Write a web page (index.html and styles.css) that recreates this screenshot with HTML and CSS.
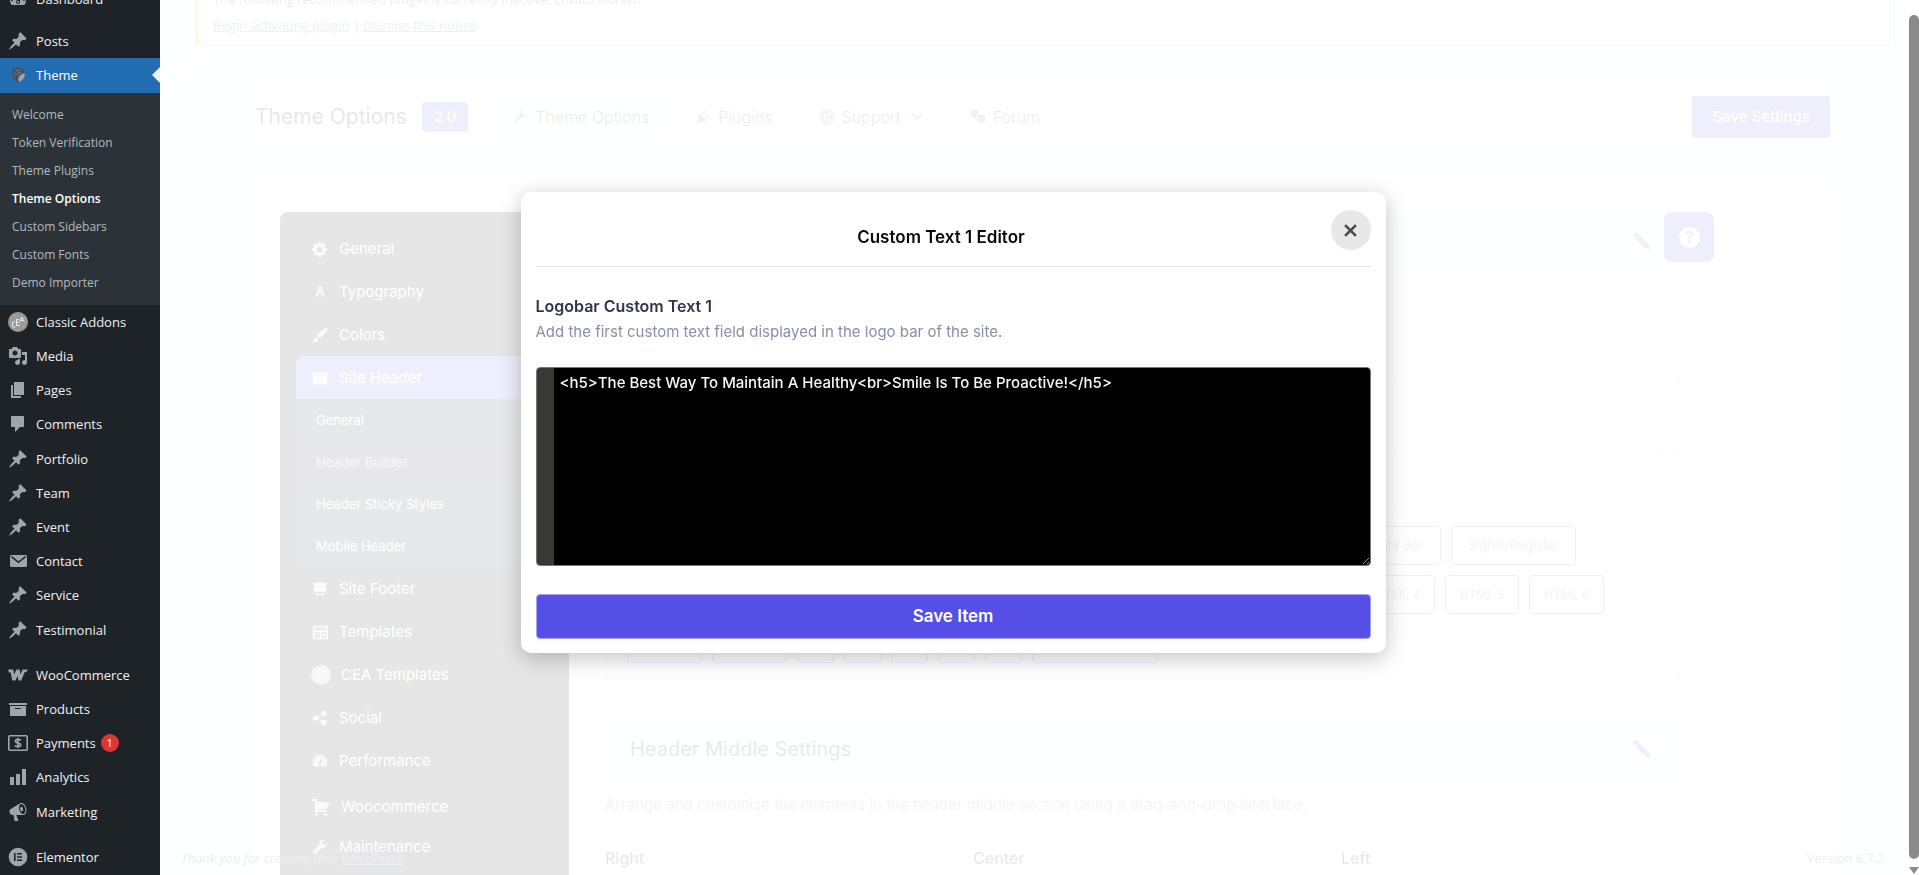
FILE: index.html
```
<!DOCTYPE html>
<html lang="en">
<head>
<meta charset="utf-8">
<title>Theme Options</title>
<link rel="stylesheet" href="styles.css">
</head>
<body>
<svg class="sprite" aria-hidden="true">
  <symbol id="pin" viewBox="0 0 20 20"><path d="M10.44 3.02l1.82-1.82 6.36 6.35-1.83 1.82c-1.05-.68-2.48-.57-3.41.36l-.75.75c-.92.93-1.04 2.35-.35 3.41l-1.83 1.82-2.41-2.41-2.8 2.79c-.42.42-3.38 2.71-3.8 2.29s1.86-3.39 2.28-3.81l2.79-2.79L4.1 9.36l1.83-1.82c1.05.69 2.48.57 3.4-.36l.75-.75c.93-.92 1.05-2.35.36-3.41z"/></symbol>
  <symbol id="media" viewBox="0 0 20 20"><path d="M13 11V4c0-.55-.45-1-1-1h-1.67L9 1H5L3.67 3H2c-.55 0-1 .45-1 1v7c0 .55.45 1 1 1h10c.55 0 1-.45 1-1zM7 4.5c1.38 0 2.5 1.12 2.5 2.5S8.38 9.5 7 9.5 4.5 8.38 4.5 7 5.62 4.5 7 4.5zM14 6h5v10.5c0 1.38-1.12 2.5-2.5 2.5S14 17.88 14 16.5s1.12-2.5 2.5-2.5c.17 0 .34.02.5.05V9h-3V6zm-4 8.05V13h2v3.5c0 1.38-1.12 2.5-2.5 2.5S7 17.88 7 16.5 8.12 14 9.5 14c.17 0 .34.02.5.05z"/></symbol>
  <symbol id="pages" viewBox="0 0 20 20"><path d="M6 15V2h10v13H6zm-1 1h8v2H3V5h2v11z"/></symbol>
  <symbol id="comments" viewBox="0 0 20 20"><path d="M4 2h11c.6 0 1 .4 1 1v9c0 .6-.4 1-1 1h-3l-5 5v-5H4c-.6 0-1-.4-1-1V3c0-.6.4-1 1-1z"/></symbol>
  <symbol id="mail" viewBox="0 0 20 20"><path d="M3.500 4h14c.8 0 1.500.7 1.500 1.500v9c0 .8-.7 1.500-1.500 1.500h-14C2.700 16 2 15.300 2 14.500v-9C2 4.700 2.700 4 3.500 4z"/><path d="M3.500 5.700l7 5.600 7-5.600" fill="none" stroke="#1d2327" stroke-width="1.600"/></symbol>
  <symbol id="archive" viewBox="0 0 20 20"><path d="M19 4v2H1V4h18zM2 7h16v10H2V7zm11 3V9H7v1h6z"/></symbol>
  <symbol id="chart" viewBox="0 0 20 20"><path d="M18 18V2h-4v16h4zm-6 0V7H8v11h4zm-6 0v-8H2v8h4z"/></symbol>
  <symbol id="megaphone" viewBox="0 0 20 20"><path d="M18.150 5.940c.46 1.620.38 3.220-.02 4.480-.42 1.280-1.260 2.180-2.300 2.480-.16.06-.26.06-.4.06-.06.02-.12.02-.18.02-.06.02-.14.02-.22.02h-6.800l2.220 5.500c.02.14-.06.26-.14.34-.08.1-.24.16-.34.16H6.950c-.1 0-.26-.06-.34-.16-.08-.08-.16-.2-.14-.34l-1-5.500H4.250l-.02-.02c-.5.06-1.080-.18-1.540-.62s-.88-1.080-1.060-1.880c-.24-.8-.2-1.560-.02-2.200.18-.62.58-1.080 1.060-1.300l.02-.02 9-5.400c.1-.06.18-.1.24-.16.06-.04.14-.08.24-.12.16-.08.28-.12.5-.18 1.040-.3 2.240.1 3.220.98s1.840 2.240 2.260 3.860zm-2.580 5.980h-.02c.4-.1.74-.34 1.040-.7.58-.7.86-1.760.86-3.040 0-.64-.1-1.300-.28-1.980-.34-1.360-1.020-2.500-1.780-3.240s-1.680-1.100-2.460-.88c-.82.22-1.400.96-1.700 2-.32 1.040-.28 2.360.06 3.720.38 1.360 1 2.500 1.800 3.240.78.74 1.620 1.100 2.480.88zm-2.540-7.080c.22-.04.42-.02.62.04.38.16.76.48 1.020 1s.42 1.200.42 1.780c0 .3-.04.56-.12.8-.18.48-.44.84-.86.94-.34.1-.8-.06-1.140-.4s-.64-.86-.78-1.500c-.18-.62-.12-1.240.02-1.720s.48-.84.82-.94z"/></symbol>
  <symbol id="gear" viewBox="0 0 20 20"><path d="M18 12h-2.180c-.17.7-.44 1.350-.81 1.930l1.540 1.540-2.100 2.100-1.540-1.540c-.58.36-1.230.63-1.910.79V19H8v-2.180c-.68-.16-1.330-.43-1.910-.79l-1.540 1.540-2.120-2.120 1.540-1.540c-.36-.58-.63-1.230-.79-1.910H1V9.030h2.170c.16-.7.44-1.350.8-1.940L2.430 5.550l2.100-2.100 1.540 1.540c.58-.37 1.240-.64 1.930-.81V2h3v2.180c.68.16 1.330.43 1.910.79l1.540-1.540 2.120 2.120-1.540 1.540c.36.59.64 1.240.8 1.940H18V12zm-8.500 1.500c1.660 0 3-1.340 3-3s-1.340-3-3-3-3 1.340-3 3 1.340 3 3 3z"/></symbol>
  <symbol id="brush" viewBox="0 0 20 20"><path d="M18.330 3.570s.27-.8-.31-1.360c-.53-.52-1.220-.24-1.220-.24-.61.3-5.760 3.470-7.670 5.570-.86.96-2.060 3.790-1.090 4.820.92.98 3.960-.17 4.790-1 2.060-2.060 5.210-7.170 5.500-7.790zM1.400 17.650c2.370-1.560 1.460-3.410 3.230-4.640.93-.65 2.220-.62 3.080.29.63.67.8 2.570-.16 3.460-1.570 1.450-4 1.550-6.150.89z"/></symbol>
  <symbol id="screen" viewBox="0 0 20 20"><path d="M3 3h14v10H3zM5 15h10v2H5z"/></symbol>
  <symbol id="template" viewBox="0 0 20 20"><path fill-rule="evenodd" d="M2 3h17v15H2zM4 5v3h13V5zM4 10v1.300h6V10zM4 12.500v1.300h6v-1.300zM4 15v1.300h6V15zM12 10v6h5v-6z"/><path d="M5 6h3v1H5zM9 6h3v1H9zM13 6h3v1h-3zM13 11h3v4h-3z"/></symbol>
  <symbol id="share" viewBox="0 0 20 20"><path d="M14.500 12c1.660 0 3 1.340 3 3s-1.340 3-3 3-3-1.340-3-3c0-.24.03-.46.09-.69l-4.380-2.300c-.55.61-1.330.99-2.210.99-1.660 0-3-1.340-3-3s1.340-3 3-3c.88 0 1.660.39 2.210.99l4.380-2.300c-.06-.23-.09-.45-.09-.69 0-1.660 1.340-3 3-3s3 1.340 3 3-1.340 3-3 3c-.88 0-1.660-.39-2.210-.99l-4.380 2.300c.06.23.09.45.09.69s-.03.46-.09.69l4.380 2.300c.55-.61 1.330-.99 2.210-.99z"/></symbol>
  <symbol id="gauge" viewBox="0 0 20 20"><path d="M3.760 16h12.480c1.100-1.370 1.760-3.110 1.760-5 0-4.420-3.580-8-8-8s-8 3.580-8 8c0 1.890.66 3.630 1.760 5zM10 4c.55 0 1 .45 1 1s-.45 1-1 1-1-.45-1-1 .45-1 1-1zM6 6c.55 0 1 .45 1 1s-.45 1-1 1-1-.45-1-1 .45-1 1-1zm8 0c.55 0 1 .45 1 1s-.45 1-1 1-1-.45-1-1 .45-1 1-1zm-5.370 5.550L12 7v6c0 1.100-.9 2-2 2s-2-.9-2-2c0-.57.24-1.080.63-1.450zM4 10c.55 0 1 .45 1 1s-.45 1-1 1-1-.45-1-1 .45-1 1-1zm12 0c.55 0 1 .45 1 1s-.45 1-1 1-1-.45-1-1 .45-1 1-1zm-5 3c0-.55-.45-1-1-1s-1 .45-1 1 .45 1 1 1 1-.45 1-1z"/></symbol>
  <symbol id="cart" viewBox="0 0 20 20"><path d="M6 13h9c.55 0 1 .45 1 1s-.45 1-1 1H5c-.55 0-1-.45-1-1V4H2c-.55 0-1-.45-1-1s.45-1 1-1h3c.55 0 1 .45 1 1v2h13l-4 7H6v1zm-.5 3c.83 0 1.500.67 1.500 1.500S6.330 19 5.500 19 4 18.330 4 17.500 4.670 16 5.500 16zm9 0c.83 0 1.500.67 1.500 1.500s-.67 1.500-1.500 1.500-1.500-.67-1.500-1.500.67-1.500 1.500-1.500z"/></symbol>
  <symbol id="wrench" viewBox="0 0 20 20"><path d="M16.680 9.770c-1.340 1.340-3.300 1.670-4.950.99l-5.410 6.520c-.99.99-2.590.99-3.580 0s-.99-2.590 0-3.570l6.520-5.420c-.68-1.650-.35-3.610.99-4.950 1.280-1.280 3.120-1.620 4.720-1.060l-2.890 2.890 2.820 2.820 2.860-2.870c.53 1.580.18 3.390-1.080 4.650zM3.810 16.210c.4.39 1.040.39 1.430 0 .4-.4.4-1.040 0-1.430-.39-.4-1.030-.4-1.430 0-.39.39-.39 1.030 0 1.430z"/></symbol>
  <symbol id="plug" viewBox="0 0 20 20"><path d="M13.110 4.360L9.870 7.600 8 5.730l3.240-3.240c.35-.34 1.050-.2 1.560.32.52.51.66 1.210.31 1.550zm-8 1.770l.91-1.120 9.010 9.010-1.190.84c-.71.71-2.630 1.160-3.820 1.160H6.140L4.900 17.260c-.59.59-1.540.59-2.120 0-.59-.58-.59-1.530 0-2.120l1.240-1.240v-3.880c0-1.130.4-3.190 1.090-3.890zm7.260 3.970l3.240-3.240c.34-.35 1.040-.21 1.550.31.52.51.66 1.210.31 1.550l-3.240 3.250z"/></symbol>
  <symbol id="people" viewBox="0 0 20 20"><path fill-rule="evenodd" d="M10 0a10 10 0 1 0 0 20 10 10 0 0 0 0-20zm0 1.500a8.500 8.500 0 1 1 0 17 8.500 8.500 0 0 1 0-17z"/><path fill-rule="evenodd" d="M10 2.500a7.500 7.500 0 1 0 0 15 7.500 7.500 0 0 0 0-15zM12 4.500a2.500 2.500 0 0 1 1 4.800l-1.500-.3a3 3 0 0 0-1-3A2.500 2.500 0 0 1 12 4.500zM8 6.500a2.200 2.200 0 1 1 0 4.400 2.200 2.200 0 0 1 0-4.400zM4.500 14c.2-1.800 1.500-2.500 3.500-2.500l2 1.500 2-1.500c2 0 3.300.7 3.500 2.500-2 1-9 1-11 0z"/></symbol>
  <symbol id="chat" viewBox="0 0 20 20"><path d="M11 6h-.82C9.070 6 8 7.200 8 8.160V10l-3 3v-3H3c-1.100 0-2-.9-2-2V3c0-1.100.9-2 2-2h6c1.100 0 2 .9 2 2v3zm0 1h6c1.100 0 2 .9 2 2v5c0 1.100-.9 2-2 2h-2v3l-3-3h-1c-1.100 0-2-.9-2-2V9c0-1.100.9-2 2-2z"/></symbol>
  <symbol id="pencil" viewBox="0 0 20 20"><path d="M1.400 5.700C0 4 .4 2.200 1.600 1.200s3-.9 4.200.6L6.600 2.800 2.300 6.700zM7.300 3.500L17.800 14l-.2 2.600-2 1.400-2.600-.3L3 7.400zM18.400 15l1.100 4.400-4.300-.8z"/></symbol>
  <symbol id="cea" viewBox="0 0 20 20"><circle cx="10" cy="10" r="10" fill="#9a9a9a"/><path d="M7 10H5.500Q4.500 10 4.500 11v3q0 1 1 1H7.500M11 7.500H8.500v6H12M8.500 10.500H11M11.500 10l2.300-5 2.400 4.500M12.500 8.300h3" fill="none" stroke="#fff" stroke-width=".8"/></symbol>
  <symbol id="cea-light" viewBox="0 0 20 20"><circle cx="10" cy="10" r="10" fill="#aaa"/><path d="M7 10H5.500Q4.500 10 4.500 11v3q0 1 1 1H7.500M11 7.500H8.500v6H12M8.500 10.500H11M11.500 10l2.300-5 2.400 4.500M12.500 8.300h3" fill="none" stroke="#fff" stroke-width=".8"/></symbol>
  <symbol id="leaf" viewBox="0 0 20 20"><path d="M4.500 7C5 3 9 1 13 3c3 1 4 3 3.500 5L11 9l-1 5 2 3C7 17 4 13 4.500 7z" fill="#4a4f57"/><path d="M16.500 8c1 3-1 7-5.500 9l-1-3c1-3 3-5 6.500-6z" fill="#a3a3a8"/><path d="M6 9c1-3 4-4 7-4M7 12c1-3 3-4 6-5" fill="none" stroke="#8b8f96" stroke-width=".7"/></symbol>
  <symbol id="woo" viewBox="0 0 20 20"><path d="M0 4.500h5.300l.7 5 2.500-5h3.200l.6 5 2.200-5H20L18.300 7h-1.500l-3.600 8.400h-2.700L9.600 11l-2.200 4.400H4.300L2.700 7.500H1z"/></symbol>
  <symbol id="money" viewBox="0 0 20 20"><rect x=".8" y="2.800" width="18.400" height="14.400" rx="1" fill="none" stroke="currentColor" stroke-width="1.600"/><path d="M12.800 7.600q-.5-1.200-2.800-1.200t-2.600 1.600q0 1.500 2.600 2t2.700 2q0 1.600-2.700 1.600t-2.800-1.200M10 5v10" fill="none" stroke="currentColor" stroke-width="1.700"/></symbol>
  <symbol id="elementor" viewBox="0 0 20 20"><path fill-rule="evenodd" d="M10 .7a9.300 9.300 0 1 0 0 18.600A9.300 9.300 0 0 0 10 .7zM6 6h1.600v8H6zM9 6h5v1.500H9zM9 9.200h5v1.500H9zM9 12.500h5V14H9z"/></symbol>
</svg>

<nav class="admin-menu" aria-label="Main menu">
  <ul class="menu-list">
    <li><a class="menu-link" href="#"><svg class="menu-icon"><use href="#gauge"/></svg>Dashboard</a></li>
    <li class="after-gap-small"><a class="menu-link" href="#"><svg class="menu-icon"><use href="#pin"/></svg>Posts</a></li>
    <li>
      <a class="menu-link current" href="#"><svg class="menu-icon"><use href="#leaf"/></svg>Theme</a>
      <ul class="submenu">
        <li><a href="#">Welcome</a></li>
        <li><a href="#">Token Verification</a></li>
        <li><a href="#">Theme Plugins</a></li>
        <li><a class="active" href="#">Theme Options</a></li>
        <li><a href="#">Custom Sidebars</a></li>
        <li><a href="#">Custom Fonts</a></li>
        <li><a href="#">Demo Importer</a></li>
      </ul>
    </li>
    <li><a class="menu-link" href="#"><svg class="menu-icon"><use href="#cea"/></svg>Classic Addons</a></li>
    <li><a class="menu-link" href="#"><svg class="menu-icon"><use href="#media"/></svg>Media</a></li>
    <li><a class="menu-link" href="#"><svg class="menu-icon"><use href="#pages"/></svg>Pages</a></li>
    <li><a class="menu-link" href="#"><svg class="menu-icon"><use href="#comments"/></svg>Comments</a></li>
    <li class="group-start"><a class="menu-link" href="#"><svg class="menu-icon"><use href="#pin"/></svg>Portfolio</a></li>
    <li><a class="menu-link" href="#"><svg class="menu-icon"><use href="#pin"/></svg>Team</a></li>
    <li><a class="menu-link" href="#"><svg class="menu-icon"><use href="#pin"/></svg>Event</a></li>
    <li><a class="menu-link" href="#"><svg class="menu-icon"><use href="#mail"/></svg>Contact</a></li>
    <li><a class="menu-link" href="#"><svg class="menu-icon"><use href="#pin"/></svg>Service</a></li>
    <li class="group-start"><a class="menu-link" href="#"><svg class="menu-icon"><use href="#pin"/></svg>Testimonial</a></li>
    <li class="after-gap"><a class="menu-link" href="#"><svg class="menu-icon"><use href="#woo"/></svg>WooCommerce</a></li>
    <li><a class="menu-link" href="#"><svg class="menu-icon"><use href="#archive"/></svg>Products</a></li>
    <li><a class="menu-link" href="#"><svg class="menu-icon"><use href="#money"/></svg>Payments <span class="count">1</span></a></li>
    <li><a class="menu-link" href="#"><svg class="menu-icon"><use href="#chart"/></svg>Analytics</a></li>
    <li class="group-start"><a class="menu-link" href="#"><svg class="menu-icon"><use href="#megaphone"/></svg>Marketing</a></li>
    <li class="after-gap"><a class="menu-link" href="#"><svg class="menu-icon"><use href="#elementor"/></svg>Elementor</a></li>
  </ul>
</nav>

<main class="page">
  <section class="notice">
    <p>The following recommended plugin is currently inactive: <em>Envato Market</em>.</p>
    <p><a href="#">Begin activating plugin</a> | <a href="#">Dismiss this notice</a></p>
  </section>

  <header class="topbar">
    <h1 class="topbar-title">Theme Options</h1>
    <span class="version">2.0</span>
    <nav class="tabs" aria-label="Theme pages">
      <a class="tab selected" href="#"><svg class="tab-icon"><use href="#wrench"/></svg>Theme Options</a>
      <a class="tab" href="#"><svg class="tab-icon"><use href="#plug"/></svg>Plugins</a>
      <a class="tab" href="#"><svg class="tab-icon"><use href="#people"/></svg>Support
        <svg class="chevron" viewBox="0 0 12 8"><path d="M1 1l5 5 5-5" fill="none" stroke="currentColor"/></svg></a>
      <a class="tab" href="#"><svg class="tab-icon"><use href="#chat"/></svg>Forum</a>
    </nav>
    <button class="save-settings" type="button">Save Settings</button>
  </header>

  <div class="panel">
    <nav class="options-menu" aria-label="Option groups">
      <a class="option" href="#"><svg class="option-icon"><use href="#gear"/></svg>General</a>
      <a class="option" href="#"><span class="option-icon letter">A</span>Typography</a>
      <a class="option" href="#"><svg class="option-icon"><use href="#brush"/></svg>Colors</a>
      <a class="option open" href="#"><svg class="option-icon"><use href="#archive"/></svg>Site Header</a>
      <div class="suboptions">
        <a href="#">General</a>
        <a class="active" href="#">Header Builder</a>
        <a href="#">Header Sticky Styles</a>
        <a href="#">Mobile Header</a>
      </div>
      <a class="option" href="#"><svg class="option-icon"><use href="#screen"/></svg>Site Footer</a>
      <a class="option" href="#"><svg class="option-icon"><use href="#template"/></svg>Templates</a>
      <a class="option wide" href="#"><svg class="option-icon"><use href="#cea-light"/></svg>CEA Templates</a>
      <a class="option" href="#"><svg class="option-icon"><use href="#share"/></svg>Social</a>
      <a class="option" href="#"><svg class="option-icon"><use href="#gauge"/></svg>Performance</a>
      <a class="option wide low" href="#"><svg class="option-icon"><use href="#cart"/></svg>Woocommerce</a>
      <a class="option" href="#"><svg class="option-icon"><use href="#wrench"/></svg>Maintenance</a>
    </nav>

    <div class="fields">
      <button class="help" type="button" aria-label="Help"><span class="help-mark">?</span></button>
      <div class="section-bar"><svg class="edit"><use href="#pencil"/></svg></div>
      <div class="dropzone short"></div>
      <div class="dropzone">
        <div class="chips from-right"><span class="chip">Secondary Bar</span><span class="chip">Signin/Register</span></div>
        <div class="chips from-right html"><span class="chip">HTML 4</span><span class="chip">HTML 5</span><span class="chip">HTML 6</span></div>
        <div class="chips"><span class="chip medium"></span><span class="chip medium"></span><span class="chip small"></span><span class="chip small"></span><span class="chip small"></span><span class="chip small"></span><span class="chip small"></span><span class="chip large"></span></div>
      </div>
      <div class="section-bar"><h2>Header Middle Settings</h2><svg class="edit"><use href="#pencil"/></svg></div>
      <p class="section-text">Arrange and customize the elements in the header middle section using a drag-and-drop interface.</p>
      <div class="columns"><h3>Right</h3><h3>Center</h3><h3>Left</h3></div>
    </div>
  </div>

  <footer class="page-footer">
    <em>Thank you for creating with <a href="#">WordPress</a>.</em>
    <span>Version 6.7.2</span>
  </footer>
  <div class="backdrop"></div>
</main>

<div class="scrollbar" aria-hidden="true"><div class="thumb"></div><div class="arrow"></div></div>

<div class="modal-layer">
  <form class="modal" role="dialog" aria-labelledby="modal-title">
    <div class="modal-head">
      <h2 id="modal-title">Custom Text 1 Editor</h2>
      <button class="close" type="button" aria-label="Close"><svg viewBox="0 0 12 12"><path d="M1 1l10 10M11 1L1 11" stroke="currentColor" stroke-width="2.400"/></svg></button>
    </div>
    <label class="field-label" for="custom-text">Logobar Custom Text 1</label>
    <p class="field-help">Add the first custom text field displayed in the logo bar of the site.</p>
    <textarea id="custom-text" class="code" spellcheck="false">&lt;h5&gt;The Best Way To Maintain A Healthy&lt;br&gt;Smile Is To Be Proactive!&lt;/h5&gt;</textarea>
    <button class="save-item" type="button">Save Item</button>
  </form>
</div>
</body>
</html>
```
FILE: styles.css
```
* { box-sizing: border-box; }

body {
  margin: 0;
  height: 100vh;
  display: flex;
  overflow: hidden;
  background: #fff;
  font-family: "Open Sans", "Noto Sans", sans-serif;
  font-size: 13px;
}

h1, h2, h3, p, ul { margin: 0; padding: 0; }
ul { list-style: none; }
svg { fill: currentColor; flex: none; }
button { font-family: inherit; cursor: pointer; }
.sprite { position: absolute; width: 0; height: 0; }

/* Admin menu */
.admin-menu { flex: none; width: 160px; overflow: hidden; background: #1d2327; }
.menu-list { margin-top: -18px; }
.menu-link {
  height: 34px;
  display: flex;
  align-items: center;
  gap: 8px;
  padding-left: 8px;
  color: #f0f0f1;
  text-decoration: none;
}
.menu-icon { width: 20px; height: 20px; color: #a0a5aa; }
.menu-link.current {
  position: relative;
  height: 35px;
  padding-bottom: 1px;
  background: #226cb1;
  color: #fff;
}
.menu-link.current::after {
  content: "";
  position: absolute;
  right: 0;
  border: 8px solid transparent;
  border-right-color: #f0f0f1;
  border-left: 0;
}
.after-gap-small { padding-top: 8px; }
.after-gap { padding-top: 11px; }
.group-start { padding-top: 1px; }
.submenu { padding: 8px 0; background: #2c3338; }
.submenu a {
  display: block;
  padding-left: 12px;
  color: #b4b9be;
  font-size: 12px;
  line-height: 28px;
  text-decoration: none;
}
.submenu .active { color: #fff; font-weight: 600; }
.count {
  width: 18px;
  height: 18px;
  margin-left: -3px;
  border-radius: 9px;
  background: #e03535;
  color: #fff;
  font-size: 11px;
  line-height: 18px;
  text-align: center;
}

/* Page behind the dialog */
.page {
  position: relative;
  flex: 1;
  min-width: 0;
  overflow: hidden;
  padding: 0 19px 0 35px;
  background: #f5fbf8;
  color: #3c434a;
}
.notice {
  height: 45px;
  display: flex;
  flex-direction: column;
  justify-content: flex-end;
  padding: 0 14px 9px;
  border: 1px solid #c3c4c7;
  border-left: 4px solid #f5b041;
  border-top: 0;
  background: #fff;
  line-height: 19px;
}
.notice p + p { margin-top: 7px; }
.notice a, .page-footer a { color: #2271b1; }

.topbar, .panel { margin: 0 55px; background: #fff; font-family: Inter, sans-serif; }
.topbar {
  height: 61px;
  margin-top: 41px;
  display: flex;
  align-items: center;
  padding: 0 5px;
  border-radius: 8px;
}
.topbar-title { font-size: 21px; font-weight: 400; color: #111; }
.version {
  margin-left: 15px;
  padding: 0 12px;
  border-radius: 4px;
  background: #554fe8;
  color: #fff;
  font-size: 15px;
  line-height: 30px;
}
.tabs { display: flex; gap: 14px; margin-left: 28px; }
.tab {
  height: 40px;
  display: flex;
  align-items: center;
  gap: 7px;
  padding: 0 16px;
  border-radius: 6px;
  color: #333;
  font-size: 16px;
  font-weight: 300;
  text-decoration: none;
}
.tab.selected { background: #f5fbf8; }
.tab-icon { width: 16px; height: 16px; color: #7b7f86; }
.chevron { width: 14px; height: 9px; margin-left: 2px; }
.save-settings {
  margin-left: auto;
  height: 42px;
  padding: 0 20px;
  border: 0;
  border-radius: 3px;
  background: #554fe8;
  color: #fff;
  font-size: 15px;
  font-weight: 500;
}

.panel {
  min-height: 800px;
  margin-top: 35px;
  display: flex;
  padding: 30px;
  border-radius: 8px;
}
.options-menu {
  width: 289px;
  padding: 15px 0 0 16px;
  border-radius: 8px;
  background: #000;
}
.option {
  height: 43px;
  display: flex;
  align-items: center;
  gap: 10px;
  padding-left: 15px;
  color: #fff;
  font-size: 15px;
  text-decoration: none;
}
.option-icon { width: 18px; height: 18px; color: #cfd3ee; }
.letter { font-weight: 600; font-size: 14px; text-align: center; }
.option.open { border-radius: 8px 0 0; background: #554fe8; }
.option.open .option-icon { color: #fff; }
.option.wide .option-icon { width: 20px; height: 20px; }
.option.low { padding-top: 6px; }
.suboptions { background: #101c28; }
.suboptions a {
  display: block;
  padding-left: 20px;
  color: #fff;
  font-size: 13px;
  line-height: 42px;
  text-decoration: none;
}
.suboptions .active { background: #1c1c30; color: #b7b4ff; }

.fields { position: relative; flex: 1; margin: 0 126px 0 36px; }
.help {
  position: absolute;
  top: 0;
  right: -35px;
  width: 50px;
  height: 50px;
  padding: 0;
  border: 0;
  border-radius: 8px;
  background: #554fe8;
}
.help-mark {
  display: block;
  width: 21px;
  margin: auto;
  border-radius: 50%;
  background: #fff;
  color: #554fe8;
  font-size: 16px;
  font-weight: 600;
  line-height: 21px;
}
.section-bar {
  height: 57px;
  display: flex;
  align-items: center;
  padding: 0 28px 0 25px;
  background: #f5fbf8;
}
.section-bar h2 { font-size: 20px; font-weight: 400; color: #222; }
.edit { width: 18px; height: 18px; margin-left: auto; color: #554fe8; }
.dropzone {
  height: 169px;
  display: flex;
  flex-direction: column;
  gap: 10px;
  margin: 59px 0 41px;
  padding: 15px 21px;
  border: 1px dashed #ccc;
}
.dropzone.short { height: 74px; margin: 108px 0 0; }
.chips { display: flex; gap: 10px; }
.chips.from-right { justify-content: flex-end; padding-right: 81px; }
.chips.html { padding-right: 53px; }
.chip {
  height: 39px;
  padding: 0 16px;
  border: 1px solid #554fe8;
  border-radius: 4px;
  color: #554fe8;
  font-size: 13px;
  font-weight: 300;
  line-height: 37px;
}
.chips.html .chip { padding: 0 14px; font-size: 12px; }
.chip.small { width: 37px; }
.chip.medium { width: 75px; }
.chip.large { width: 126px; }
.section-text { margin-top: 18px; color: #8a8f99; font-size: 15px; line-height: 20px; }
.columns { display: grid; grid-template-columns: repeat(3, 1fr); gap: 30px; margin-top: 32px; }
.columns h3 { font-size: 16px; font-weight: 500; line-height: 22px; color: #222; }

.page-footer {
  position: absolute;
  inset: auto 24px 7px 21px;
  display: flex;
  justify-content: space-between;
  line-height: 20px;
}
.backdrop { position: absolute; inset: 0; background: rgba(255, 255, 255, 0.9); }

/* Scrollbar */
.scrollbar {
  flex: none;
  width: 10px;
  display: flex;
  flex-direction: column;
  align-items: center;
  gap: 8px;
  padding: 15px 0 1px;
}
.thumb { flex: 1; width: 10px; border-radius: 5px; background: #8b8b8b; }
.arrow { border: 5px solid transparent; border-top: 7px solid #8b8b8b; border-bottom: 0; }

/* Dialog */
.modal-layer {
  position: fixed;
  inset: 0 13px 0 0;
  display: flex;
  justify-content: center;
  align-items: flex-start;
  padding-top: 192px;
  font-family: Inter, sans-serif;
}
.modal {
  width: 865px;
  padding: 0 15px 14px;
  border-radius: 10px;
  background: #fff;
  box-shadow: 0 5px 22px rgba(0, 0, 0, 0.24);
}
.modal-head {
  position: relative;
  height: 75px;
  display: flex;
  justify-content: center;
  align-items: flex-end;
  padding: 0 24px 17px 0;
  border-bottom: 1px solid #e6e6e8;
}
.modal-head h2 { font-size: 17px; font-weight: 600; line-height: 24px; color: #0a0a0a; }
.close {
  position: absolute;
  top: 18px;
  right: 0;
  width: 40px;
  height: 40px;
  padding: 0;
  border: 0;
  border-radius: 50%;
  background: #e9e8e8;
  color: #4a4a4a;
}
.close svg { display: block; width: 13px; height: 13px; margin: auto; }
.field-label {
  display: block;
  margin-top: 27px;
  color: #2d3748;
  font-size: 16px;
  font-weight: 600;
  line-height: 24px;
}
.field-help { margin-top: 4px; color: #8790a5; font-size: 15px; line-height: 20px; }
.code {
  display: block;
  width: 100%;
  height: 199px;
  margin-top: 25px;
  padding: 3px 8px 3px 23px;
  border: 1px solid #777;
  border-radius: 4px;
  outline: 0;
  background: linear-gradient(90deg, #393833 17px, #000 17px);
  color: #f8f8f2;
  font-family: inherit;
  font-size: 15px;
  font-weight: 500;
  line-height: 24px;
  resize: vertical;
}
.save-item {
  width: 100%;
  height: 45px;
  margin-top: 28px;
  padding: 0 0 2px;
  border: 1px solid #a5a2f3;
  border-radius: 4px;
  background: #554fe8;
  color: #fff;
  font-size: 17px;
  font-weight: 600;
}
```
